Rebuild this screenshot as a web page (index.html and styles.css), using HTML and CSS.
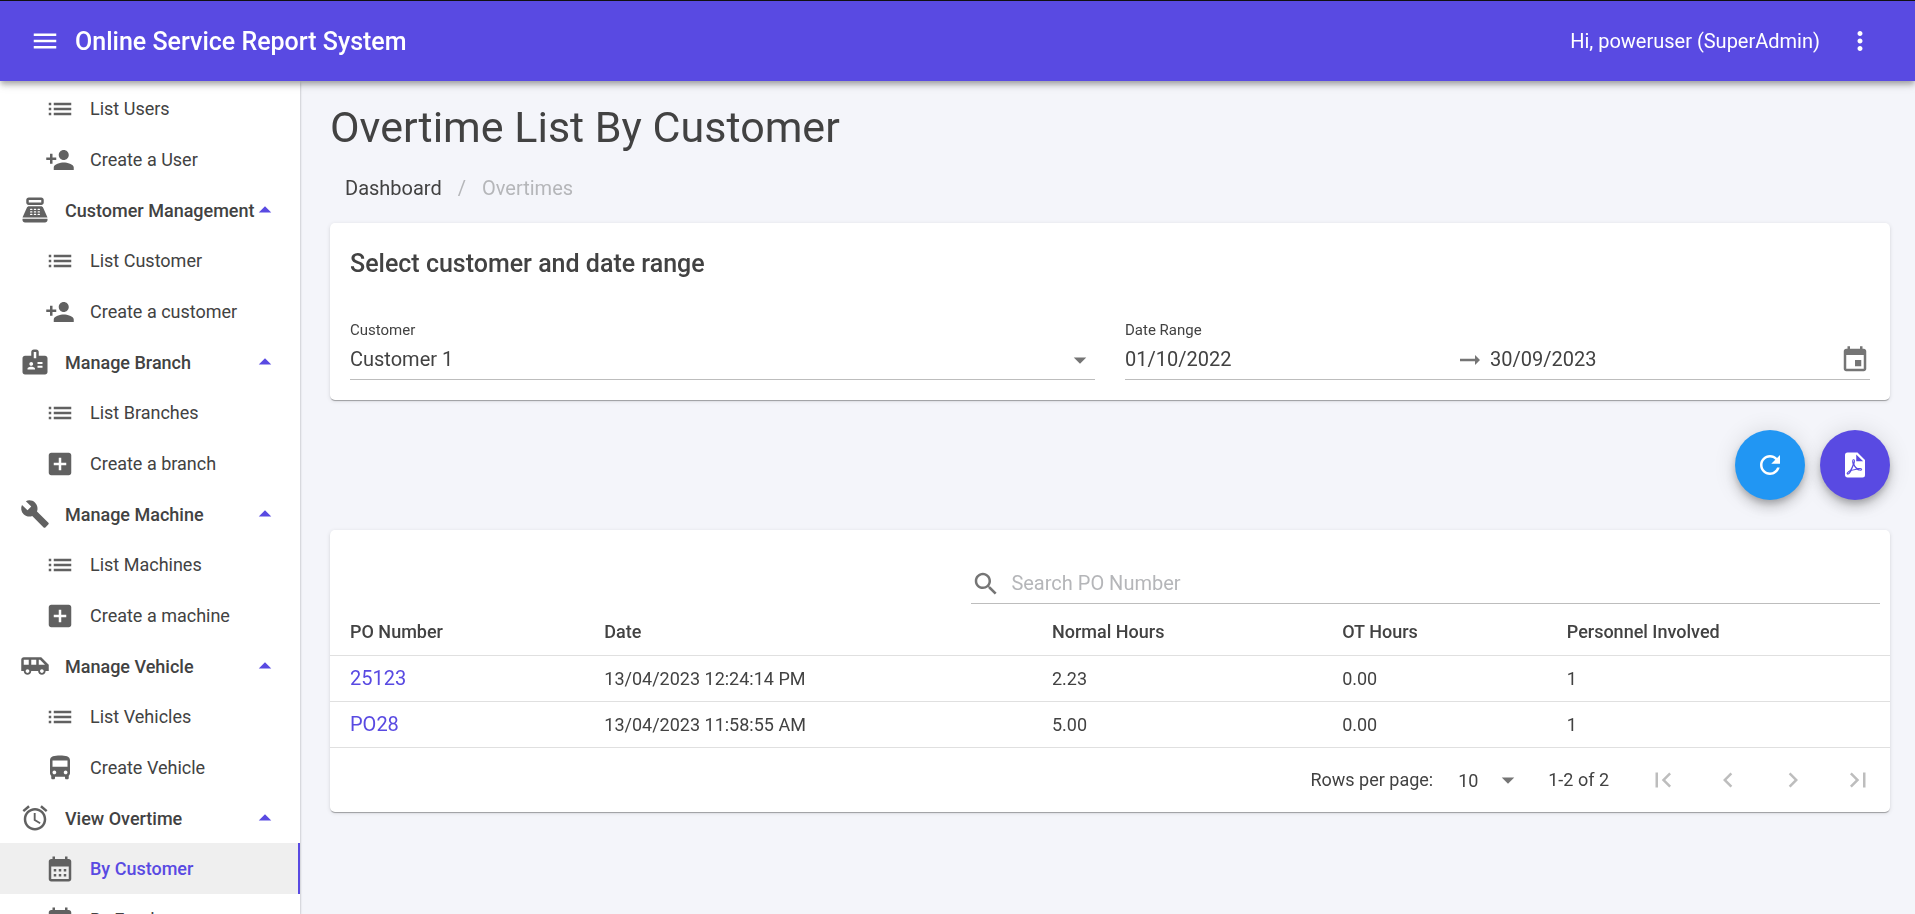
FILE: index.html
```html
<!DOCTYPE html>
<html lang="en">
<head>
<meta charset="utf-8">
<meta name="viewport" content="width=device-width, initial-scale=1">
<title>Overtime List By Customer</title>
<link rel="stylesheet" href="styles.css">
</head>
<body>
<svg class="sprite" aria-hidden="true">
  <symbol id="i-menu" viewBox="0 0 24 24"><path d="M3 18h18v-2H3v2zm0-5h18v-2H3v2zm0-7v2h18V6H3z"/></symbol>
  <symbol id="i-more" viewBox="0 0 24 24"><path d="M12 8c1.100 0 2-.9 2-2s-.9-2-2-2-2 .9-2 2 .9 2 2 2zm0 2c-1.100 0-2 .9-2 2s.9 2 2 2 2-.9 2-2-.9-2-2-2zm0 6c-1.100 0-2 .9-2 2s.9 2 2 2 2-.9 2-2-.9-2-2-2z"/></symbol>
  <symbol id="i-list" viewBox="0 0 24 24"><path d="M3 13h2v-2H3v2zm0 4h2v-2H3v2zm0-8h2V7H3v2zm4 4h14v-2H7v2zm0 4h14v-2H7v2zM7 7v2h14V7H7z"/></symbol>
  <symbol id="i-person-add" viewBox="0 0 24 24"><path d="M15 12c2.210 0 4-1.790 4-4s-1.790-4-4-4-4 1.790-4 4 1.790 4 4 4zm-9-2V7H4v3H1v2h3v3h2v-3h3v-2H6zm9 4c-2.670 0-8 1.340-8 4v2h16v-2c0-2.660-5.330-4-8-4z"/></symbol>
  <symbol id="i-pos" viewBox="0 0 24 24"><path fill-rule="evenodd" d="M17 2H7c-1.100 0-2 .9-2 2v2c0 1.100.9 2 2 2h10c1.100 0 2-.9 2-2V4c0-1.100-.9-2-2-2zm0 4H7V4h10v2zM20 22H4c-1.100 0-2-.9-2-2v-1h20v1c0 1.100-.9 2-2 2zM18.530 10.190C18.210 9.470 17.490 9 16.700 9H7.300c-.79 0-1.510.47-1.830 1.190L2 18h20zM8.500 11h1a.5.5 0 0 1 0 1h-1a.5.5 0 0 1 0-1zM8.500 13h1a.5.5 0 0 1 0 1h-1a.5.5 0 0 1 0-1zM8.500 15h1a.5.5 0 0 1 0 1h-1a.5.5 0 0 1 0-1zM11.500 11h1a.5.5 0 0 1 0 1h-1a.5.5 0 0 1 0-1zM11.500 13h1a.5.5 0 0 1 0 1h-1a.5.5 0 0 1 0-1zM11.500 15h1a.5.5 0 0 1 0 1h-1a.5.5 0 0 1 0-1zM14.500 11h1a.5.5 0 0 1 0 1h-1a.5.5 0 0 1 0-1zM14.500 13h1a.5.5 0 0 1 0 1h-1a.5.5 0 0 1 0-1zM14.500 15h1a.5.5 0 0 1 0 1h-1a.5.5 0 0 1 0-1z"/></symbol>
  <symbol id="i-badge" viewBox="0 0 24 24"><path d="M20 7h-5V4c0-1.100-.9-2-2-2h-2c-1.100 0-2 .9-2 2v3H4c-1.100 0-2 .9-2 2v11c0 1.100.9 2 2 2h16c1.100 0 2-.9 2-2V9c0-1.100-.9-2-2-2zM9 12c.83 0 1.500.67 1.500 1.500S9.830 15 9 15s-1.500-.67-1.500-1.500S8.170 12 9 12zm3 6H6v-.75c0-1 2-1.500 3-1.500s3 .5 3 1.500V18zm1-9h-2V4h2v5zm5 7.500h-4V15h4v1.500zm0-3h-4V12h4v1.500z"/></symbol>
  <symbol id="i-add-box" viewBox="0 0 24 24"><path d="M19 3H5c-1.110 0-2 .9-2 2v14c0 1.100.89 2 2 2h14c1.100 0 2-.9 2-2V5c0-1.100-.9-2-2-2zm-2 10h-4v4h-2v-4H7v-2h4V7h2v4h4v2z"/></symbol>
  <symbol id="i-build" viewBox="0 0 24 24"><path d="M22.700 19l-9.100-9.100c.9-2.300.4-5-1.500-6.900-2-2-5-2.400-7.400-1.300L9 6 6 9 1.600 4.700C.4 7.100.9 10.100 2.900 12.100c1.900 1.900 4.600 2.400 6.900 1.500l9.100 9.100c.4.4 1 .4 1.400 0l2.300-2.300c.5-.4.5-1.100.1-1.400z"/></symbol>
  <symbol id="i-shuttle" viewBox="0 0 24 24"><path d="M17 5H3c-1.100 0-2 .89-2 2v9h2c0 1.650 1.340 3 3 3s3-1.350 3-3h5.500c0 1.650 1.340 3 3 3s3-1.350 3-3H23v-5l-6-6zM3 11V7h4v4H3zm3 6.500c-.83 0-1.500-.67-1.500-1.500s.67-1.500 1.500-1.500 1.500.67 1.500 1.500-.67 1.500-1.500 1.500zm7-6.500H9V7h4v4zm4.500 6.500c-.83 0-1.500-.67-1.500-1.500s.67-1.500 1.500-1.500 1.500.67 1.500 1.500-.67 1.500-1.500 1.500zM15 11V7h1l4 4h-5z"/></symbol>
  <symbol id="i-bus" viewBox="0 0 24 24"><path d="M4 16c0 .88.39 1.670 1 2.220V20c0 .55.45 1 1 1h1c.55 0 1-.45 1-1v-1h8v1c0 .55.45 1 1 1h1c.55 0 1-.45 1-1v-1.780c.61-.55 1-1.340 1-2.220V6c0-3.500-3.580-4-8-4s-8 .5-8 4v10zm3.500 1c-.83 0-1.500-.67-1.500-1.500S6.670 14 7.500 14s1.500.67 1.500 1.500S8.330 17 7.500 17zm9 0c-.83 0-1.500-.67-1.500-1.500s.67-1.500 1.500-1.500 1.500.67 1.500 1.500-.67 1.500-1.500 1.500zm1.500-6H6V6h12v5z"/></symbol>
  <symbol id="i-alarm" viewBox="0 0 24 24"><path d="M22 5.720l-4.600-3.860-1.290 1.530 4.600 3.860L22 5.720zM7.880 3.390L6.600 1.860 2 5.710l1.290 1.530 4.590-3.850zM12.500 8H11v6l4.750 2.850.75-1.230-4-2.370V8zM12 4c-4.970 0-9 4.030-9 9s4.020 9 9 9c4.970 0 9-4.030 9-9s-4.030-9-9-9zm0 16c-3.870 0-7-3.130-7-7s3.130-7 7-7 7 3.130 7 7-3.130 7-7 7z"/></symbol>
  <symbol id="i-calendar" viewBox="0 0 24 24"><path d="M19 4h-1V2h-2v2H8V2H6v2H5c-1.110 0-1.990.9-1.990 2L3 20c0 1.100.89 2 2 2h14c1.100 0 2-.9 2-2V6c0-1.100-.9-2-2-2zm0 16H5V10h14v10zM9 14H7v-2h2v2zm4 0h-2v-2h2v2zm4 0h-2v-2h2v2zm-8 4H7v-2h2v2zm4 0h-2v-2h2v2zm4 0h-2v-2h2v2z"/></symbol>
  <symbol id="i-event" viewBox="0 0 24 24"><path d="M17 12h-5v5h5v-5zM16 1v2H8V1H6v2H5c-1.110 0-1.990.9-1.990 2L3 19c0 1.100.89 2 2 2h14c1.100 0 2-.9 2-2V5c0-1.100-.9-2-2-2h-1V1h-2zm3 18H5V8h14v11z"/></symbol>
  <symbol id="i-up" viewBox="0 0 24 24"><path d="M7 14l5-5 5 5z"/></symbol>
  <symbol id="i-down" viewBox="0 0 24 24"><path d="M7 10l5 5 5-5z"/></symbol>
  <symbol id="i-arrow" viewBox="0 0 24 24"><path d="M16.010 11H4v2h12.010v3L20 12l-3.990-4z"/></symbol>
  <symbol id="i-refresh" viewBox="0 0 24 24"><path d="M17.650 6.350C16.200 4.900 14.210 4 12 4c-4.420 0-7.990 3.580-7.990 8s3.570 8 7.990 8c3.730 0 6.840-2.550 7.730-6h-2.080c-.82 2.330-3.040 4-5.650 4-3.310 0-6-2.690-6-6s2.690-6 6-6c1.660 0 3.140.69 4.220 1.780L13 11h7V4l-2.350 2.350z"/></symbol>
  <symbol id="i-pdf" viewBox="1 0 24 24"><path d="M14,9H19.500L14,3.500V9M7,2H15L21,8V20A2,2 0 0,1 19,22H7C5.890,22 5,21.100 5,20V4A2,2 0 0,1 7,2M11.930,12.440C12.340,13.340 12.860,14.080 13.460,14.590L13.870,14.910C13,15.070 11.800,15.350 10.530,15.840V15.840L10.420,15.880L10.920,14.840C11.370,13.970 11.700,13.180 11.930,12.440M18.410,16.250C18.590,16.070 18.680,15.840 18.690,15.590C18.720,15.390 18.670,15.200 18.570,15.040C18.280,14.570 17.530,14.350 16.290,14.350L15,14.420L14.130,13.840C13.500,13.320 12.930,12.410 12.530,11.280L12.570,11.140C12.900,9.810 13.210,8.200 12.550,7.540C12.390,7.380 12.170,7.300 11.940,7.300H11.700C11.330,7.300 11,7.690 10.910,8.070C10.540,9.400 10.760,10.130 11.130,11.340V11.350C10.880,12.230 10.560,13.250 10.050,14.280L9.090,16.080L8.200,16.570C7,17.320 6.430,18.160 6.320,18.690C6.280,18.880 6.300,19.050 6.370,19.230L6.400,19.280L6.880,19.590L7.320,19.700C8.130,19.700 9.050,18.750 10.290,16.630L10.470,16.560C11.500,16.230 12.780,16 14.500,15.810C15.530,16.320 16.740,16.550 17.500,16.550C17.940,16.550 18.240,16.440 18.410,16.250M18,15.540L18.090,15.650C18.080,15.750 18.050,15.760 18,15.780H17.960L17.770,15.800C17.310,15.800 16.600,15.610 15.870,15.290C15.960,15.190 16,15.190 16.100,15.190C17.500,15.190 17.900,15.440 18,15.540M8.830,17C8.180,18.190 7.590,18.850 7.140,19C7.190,18.620 7.640,17.960 8.350,17.310L8.830,17M11.850,10.090C11.620,9.190 11.610,8.460 11.780,8.040L11.850,7.920L12,7.970C12.170,8.210 12.190,8.530 12.090,9.070L12.060,9.230L11.900,10.050L11.850,10.090Z"/></symbol>
  <symbol id="i-search" viewBox="0 0 24 24"><path d="M15.500 14h-.79l-.28-.27C15.410 12.590 16 11.110 16 9.500 16 5.910 13.090 3 9.500 3S3 5.910 3 9.500 5.910 16 9.500 16c1.610 0 3.090-.59 4.230-1.570l.27.28v.79l5 4.990L20.490 19l-4.990-5zm-6 0C7.010 14 5 11.990 5 9.500S7.010 5 9.500 5 14 7.010 14 9.500 11.990 14 9.500 14z"/></symbol>
  <symbol id="i-first" viewBox="0 0 24 24"><path d="M18.410 16.590L13.820 12l4.590-4.590L17 6l-6 6 6 6zM6 6h2v12H6z"/></symbol>
  <symbol id="i-prev" viewBox="0 0 24 24"><path d="M15.410 7.410L14 6l-6 6 6 6 1.410-1.410L10.830 12z"/></symbol>
  <symbol id="i-next" viewBox="0 0 24 24"><path d="M10 6L8.590 7.410 13.170 12l-4.580 4.590L10 18l6-6z"/></symbol>
  <symbol id="i-last" viewBox="0 0 24 24"><path d="M5.590 7.410L10.180 12l-4.590 4.590L7 18l6-6-6-6zM16 6h2v12h-2z"/></symbol>
</svg>

<header class="appbar">
  <button class="appbar-btn" type="button" aria-label="Toggle menu"><svg class="icon"><use href="#i-menu"/></svg></button>
  <span class="appbar-title">Online Service Report System</span>
  <span class="appbar-user">Hi, poweruser (SuperAdmin)</span>
  <button class="appbar-btn" type="button" aria-label="More options"><svg class="icon"><use href="#i-more"/></svg></button>
</header>

<div class="layout">
  <nav class="drawer" aria-label="Main">
    <a class="nav-link" href="#"><svg class="icon"><use href="#i-list"/></svg>List Users</a>
    <a class="nav-link" href="#"><svg class="icon"><use href="#i-person-add"/></svg>Create a User</a>

    <button class="nav-group" type="button" aria-expanded="true"><svg class="icon"><use href="#i-pos"/></svg><span class="nav-group-text">Customer Management</span><svg class="icon nav-caret"><use href="#i-up"/></svg></button>
    <a class="nav-link" href="#"><svg class="icon"><use href="#i-list"/></svg>List Customer</a>
    <a class="nav-link" href="#"><svg class="icon"><use href="#i-person-add"/></svg>Create a customer</a>

    <button class="nav-group" type="button" aria-expanded="true"><svg class="icon"><use href="#i-badge"/></svg><span class="nav-group-text">Manage Branch</span><svg class="icon nav-caret"><use href="#i-up"/></svg></button>
    <a class="nav-link" href="#"><svg class="icon"><use href="#i-list"/></svg>List Branches</a>
    <a class="nav-link" href="#"><svg class="icon"><use href="#i-add-box"/></svg>Create a branch</a>

    <button class="nav-group" type="button" aria-expanded="true"><svg class="icon"><use href="#i-build"/></svg><span class="nav-group-text">Manage Machine</span><svg class="icon nav-caret"><use href="#i-up"/></svg></button>
    <a class="nav-link" href="#"><svg class="icon"><use href="#i-list"/></svg>List Machines</a>
    <a class="nav-link" href="#"><svg class="icon"><use href="#i-add-box"/></svg>Create a machine</a>

    <button class="nav-group" type="button" aria-expanded="true"><svg class="icon"><use href="#i-shuttle"/></svg><span class="nav-group-text">Manage Vehicle</span><svg class="icon nav-caret"><use href="#i-up"/></svg></button>
    <a class="nav-link" href="#"><svg class="icon"><use href="#i-list"/></svg>List Vehicles</a>
    <a class="nav-link" href="#"><svg class="icon"><use href="#i-bus"/></svg>Create Vehicle</a>

    <button class="nav-group" type="button" aria-expanded="true"><svg class="icon"><use href="#i-alarm"/></svg><span class="nav-group-text">View Overtime</span><svg class="icon nav-caret"><use href="#i-up"/></svg></button>
    <a class="nav-link nav-link-active" href="#" aria-current="page"><svg class="icon"><use href="#i-calendar"/></svg>By Customer</a>
    <a class="nav-link" href="#"><svg class="icon"><use href="#i-calendar"/></svg>By Employee</a>
  </nav>

  <main class="content">
    <h1 class="page-title">Overtime List By Customer</h1>
    <nav class="breadcrumbs" aria-label="Breadcrumb">
      <a class="crumb" href="#">Dashboard</a>
      <span class="crumb-muted">/</span>
      <span class="crumb-muted">Overtimes</span>
    </nav>

    <section class="card filter">
      <h2 class="card-title">Select customer and date range</h2>
      <div class="fields">
        <div class="field">
          <label class="field-label" for="customer">Customer</label>
          <div class="control">
            <select class="input" id="customer"><option>Customer 1</option></select>
            <svg class="icon select-caret"><use href="#i-down"/></svg>
          </div>
        </div>
        <div class="field">
          <label class="field-label" for="date-from">Date Range</label>
          <div class="control">
            <input class="input" id="date-from" type="text" value="01/10/2022">
            <svg class="icon"><use href="#i-arrow"/></svg>
            <input class="input date-to" type="text" value="30/09/2023" aria-label="Date range end">
            <button class="icon-btn" type="button" aria-label="Open calendar"><svg class="icon"><use href="#i-event"/></svg></button>
          </div>
        </div>
      </div>
    </section>

    <div class="actions">
      <button class="fab fab-info" type="button" aria-label="Refresh"><svg class="icon"><use href="#i-refresh"/></svg></button>
      <button class="fab fab-primary" type="button" aria-label="Export PDF"><svg class="icon"><use href="#i-pdf"/></svg></button>
    </div>

    <section class="card">
      <div class="toolbar">
        <div class="control search">
          <svg class="icon"><use href="#i-search"/></svg>
          <input class="input" type="text" placeholder="Search PO Number" aria-label="Search PO Number">
        </div>
      </div>
      <table class="table">
        <colgroup><col class="col-po"><col class="col-date"><col class="col-normal"><col class="col-ot"><col></colgroup>
        <thead>
          <tr><th>PO Number</th><th>Date</th><th>Normal Hours</th><th>OT Hours</th><th>Personnel Involved</th></tr>
        </thead>
        <tbody>
          <tr><td><a class="po-link" href="#">25123</a></td><td>13/04/2023 12:24:14 PM</td><td>2.23</td><td>0.00</td><td>1</td></tr>
          <tr><td><a class="po-link" href="#">PO28</a></td><td>13/04/2023 11:58:55 AM</td><td>5.00</td><td>0.00</td><td>1</td></tr>
        </tbody>
      </table>
      <div class="pager">
        <label for="rows">Rows per page:</label>
        <div class="pager-size">
          <select class="pager-select" id="rows"><option>10</option></select>
          <svg class="icon select-caret"><use href="#i-down"/></svg>
        </div>
        <span>1-2 of 2</span>
        <div class="pager-nav">
          <button class="pager-btn" type="button" disabled aria-label="First page"><svg class="icon"><use href="#i-first"/></svg></button>
          <button class="pager-btn" type="button" disabled aria-label="Previous page"><svg class="icon"><use href="#i-prev"/></svg></button>
          <button class="pager-btn" type="button" disabled aria-label="Next page"><svg class="icon"><use href="#i-next"/></svg></button>
          <button class="pager-btn" type="button" disabled aria-label="Last page"><svg class="icon"><use href="#i-last"/></svg></button>
        </div>
      </div>
    </section>
  </main>
</div>
</body>
</html>
```
FILE: styles.css
```css
:root {
  --primary: #594ae2;
  --info: #2196f3;
  --text: #424242;
  --icon: #616161;
  --muted: #b5b6b9;
  --line: #bdbdbd;
  --row-line: #e0e0e0;
}

* {
  box-sizing: border-box;
}

body {
  margin: 0;
  height: 100vh;
  display: flex;
  flex-direction: column;
  overflow: hidden;
  background: #f4f5fa;
  color: var(--text);
  font-family: Roboto, "Liberation Sans", sans-serif;
  font-size: 18px;
}

button,
input,
select {
  font: inherit;
  color: inherit;
  border: 0;
  padding: 0;
  margin: 0;
  background: none;
}

a {
  color: inherit;
  text-decoration: none;
}

.sprite {
  display: none;
}

.icon {
  width: 30px;
  height: 30px;
  flex: none;
  display: block;
  fill: currentColor;
}

/* App bar */
.appbar {
  position: relative;
  z-index: 2;
  flex: none;
  display: flex;
  align-items: center;
  height: 81px;
  padding: 0 25px 0 15px;
  border-top: 1px solid #111;
  background: var(--primary);
  color: #fff;
  box-shadow: 0 3px 5px -1px rgba(0, 0, 0, .2), 0 5px 6px rgba(0, 0, 0, .14), 0 1px 13px rgba(0, 0, 0, .12);
}

.appbar-btn {
  display: grid;
  place-items: center;
  width: 60px;
  height: 60px;
}

.appbar-title {
  flex: 1;
  font-size: 25px;
  font-weight: 500;
}

.appbar-user {
  margin-right: 10px;
  font-size: 20px;
}

.layout {
  flex: 1;
  min-height: 0;
  display: flex;
}

/* Drawer */
.drawer {
  flex: none;
  width: 300px;
  padding-top: 2px;
  overflow-y: auto;
  scrollbar-width: none;
  background: #fff;
  box-shadow: 0 2px 2px rgba(0, 0, 0, .2), 0 1px 3px rgba(0, 0, 0, .14);
}

.nav-link,
.nav-group {
  display: flex;
  align-items: center;
  gap: 15px;
  width: 100%;
  text-align: left;
}

.nav-link {
  height: 51px;
  padding-left: 45px;
}

.nav-group {
  height: 50px;
  padding: 0 20px;
  font-weight: 500;
}

.nav-group-text {
  flex: 1;
  min-width: 0;
  white-space: nowrap;
}

.drawer .icon {
  color: var(--icon);
}

.drawer .nav-caret {
  margin-left: -15px;
  color: var(--primary);
}

.nav-link-active {
  background: #efefef;
  border-right: 2px solid var(--primary);
  color: var(--primary);
  font-weight: 500;
}

/* Page */
.content {
  flex: 1;
  min-width: 0;
  overflow-y: auto;
  padding: 20px 25px 20px 30px;
}

.page-title {
  margin: 0;
  font-size: 43px;
  font-weight: 400;
  line-height: 52px;
}

.breadcrumbs {
  display: flex;
  gap: 16px;
  padding: 20px 15px;
  font-size: 20px;
  line-height: 30px;
}

.crumb-muted {
  color: var(--muted);
}

.card {
  border-radius: 5px;
  background: #fff;
  box-shadow: 0 2px 1px -1px rgba(0, 0, 0, .2), 0 1px 1px rgba(0, 0, 0, .14), 0 1px 4px rgba(0, 0, 0, .12);
}

.filter {
  padding: 20px;
}

.card-title {
  margin: 0 0 36px;
  font-size: 25px;
  font-weight: 500;
  line-height: 41px;
}

.fields {
  display: grid;
  grid-template-columns: 1fr 1fr;
  gap: 30px;
}

.field-label {
  display: block;
  font-size: 15px;
  line-height: 20px;
}

.control {
  position: relative;
  display: flex;
  align-items: center;
  height: 40px;
  border-bottom: 1px solid var(--line);
  font-size: 20px;
}

.control .icon,
.pager-size .icon {
  color: #757575;
}

.input {
  flex: 1;
  min-width: 0;
  height: 100%;
  padding-bottom: 1px;
  outline: 0;
  appearance: none;
}

.date-to {
  margin: 0 20px 0 5px;
}

.select-caret {
  position: absolute;
  right: 0;
  pointer-events: none;
}

.actions {
  display: flex;
  justify-content: flex-end;
  gap: 15px;
  margin: 30px 0;
}

.fab {
  display: grid;
  place-items: center;
  width: 70px;
  height: 70px;
  border-radius: 50%;
  color: #fff;
  box-shadow: 0 4px 6px -1px rgba(0, 0, 0, .2), 0 8px 13px rgba(0, 0, 0, .14), 0 1px 23px rgba(0, 0, 0, .12);
}

.fab-info {
  background: var(--info);
}

.fab-primary {
  background: var(--primary);
}

/* Table */
.toolbar {
  display: grid;
  grid-template-columns: 12fr 17fr;
  padding: 34px 10px 5px 0;
}

.search {
  grid-column: 2;
  gap: 10px;
}

.search .input::placeholder {
  color: var(--muted);
  opacity: 1;
}

.table {
  width: 100%;
  table-layout: fixed;
  border-collapse: collapse;
}

.col-po {
  width: 16.3%;
}

.col-date {
  width: 28.7%;
}

.col-normal {
  width: 18.6%;
}

.col-ot {
  width: 14.4%;
}

.table th,
.table td {
  height: 46px;
  padding: 0 20px;
  border-bottom: 1px solid var(--row-line);
  text-align: left;
}

.table th {
  font-weight: 500;
}

.po-link {
  color: var(--primary);
  font-size: 20px;
}

.pager {
  display: flex;
  align-items: center;
  justify-content: flex-end;
  height: 64px;
  padding-right: 2px;
}

.pager-size {
  position: relative;
  display: flex;
  align-items: center;
  width: 65px;
  margin: 0 25px;
}

.pager-select {
  width: 100%;
  height: 30px;
  padding-top: 2px;
  appearance: none;
}

.pager-nav {
  display: flex;
  gap: 5px;
  margin-left: 24px;
}

.pager-btn {
  display: grid;
  place-items: center;
  width: 60px;
  height: 60px;
  color: #bdbdbd;
}
```
